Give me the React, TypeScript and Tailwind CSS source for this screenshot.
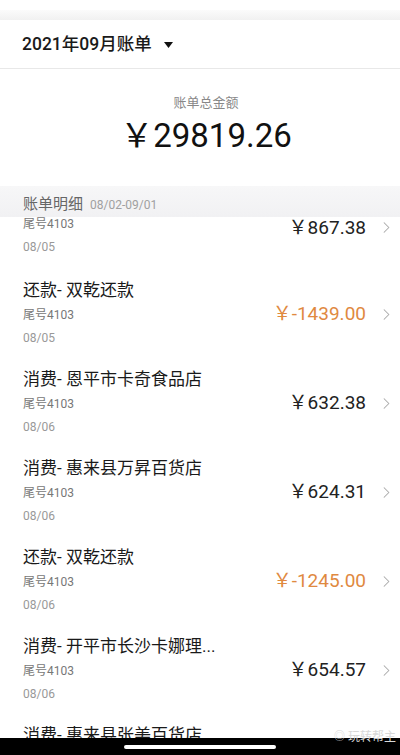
import { ChevronRight } from "lucide-react";

type Bill = { title: string; card: string; date: string; amount: string; refund?: boolean };

// first bill is scrolled half under the sticky header, so it is drawn apart
const firstBill: Bill = { title: "", card: "尾号4103", date: "08/05", amount: "￥867.38" };

const bills: Bill[] = [
    { title: "还款- 双乾还款", card: "尾号4103", date: "08/05", amount: "￥-1439.00", refund: true },
    { title: "消费- 恩平市卡奇食品店", card: "尾号4103", date: "08/06", amount: "￥632.38" },
    { title: "消费- 惠来县万昇百货店", card: "尾号4103", date: "08/06", amount: "￥624.31" },
    { title: "还款- 双乾还款", card: "尾号4103", date: "08/06", amount: "￥-1245.00", refund: true },
    { title: "消费- 开平市长沙卡娜理...", card: "尾号4103", date: "08/06", amount: "￥654.57" },
    { title: "消费- 惠来县张美百货店", card: "尾号4103", date: "08/07", amount: "￥588.20" },
];

const amountColor = (b: Bill) => b.refund ? 'text-[#e0893f]' : 'text-[#222]';

const BillRow = ({ bill }: { bill: Bill }) => {
    return <div className="h-[89px] shrink-0 pt-[10px] pl-[23px] pr-[4px] flex flex-row items-start">
        <div className="flex-1 flex flex-col">
            <p className="text-[17px] leading-[22px] text-[#1a1a1a] whitespace-nowrap">{bill.title}</p>
            <p className="text-[12px] leading-[22px] mt-[3px] text-[#777]">{bill.card}</p>
            <p className="text-[12px] leading-[22px] mt-[1px] text-[#999]">{bill.date}</p>
        </div>
        <p className={`text-[19px] leading-[26px] mt-[22px] ${amountColor(bill)}`}>{bill.amount}</p>
        <ChevronRight className="ml-[11px] mt-[26px] text-[#a8a8a8]" size={19} strokeWidth={1.3} />
    </div>
}

const FirstRow = ({ bill }: { bill: Bill }) => {
    return <div className="h-[52px] shrink-0 pl-[23px] pr-[4px] flex flex-row items-start">
        <div className="flex-1 flex flex-col">
            <p className="text-[12px] leading-[14px] text-[#777]">{bill.card}</p>
            <p className="text-[12px] leading-[22px] mt-[5px] text-[#999]">{bill.date}</p>
        </div>
        <p className={`text-[19px] leading-[22px] ${amountColor(bill)}`}>{bill.amount}</p>
        <ChevronRight className="ml-[11px] mt-[1px] text-[#a8a8a8]" size={19} strokeWidth={1.3} />
    </div>
}

export default function App() {
    return <div className="w-[400px] h-[755px] overflow-hidden bg-white flex flex-col" style={{ fontFamily: "Roboto, 'Noto Sans CJK SC', sans-serif" }}>
        <div className="h-[10px] shrink-0 bg-white" />
        <div className="h-[10px] shrink-0 bg-gradient-to-b from-[#fbfbfb] to-[#f1f1f1]" />
        <div className="h-[49px] shrink-0 flex flex-row items-center pl-[22px] border-b border-[#e8e8e8]">
            <p className="text-[17.5px] font-medium text-[#1a1a1a]">2021年09月账单</p>
            <svg className="ml-[12px] mt-[1px]" width="9" height="6" viewBox="0 0 9 6"><polygon points="0,0 9,0 4.5,6" fill="#111" /></svg>
        </div>
        <div className="h-[117px] shrink-0 flex flex-col items-center pt-[26px] pl-[12px]">
            <p className="text-[13px] leading-[16px] text-[#888]">账单总金额</p>
            <p className="text-[33px] leading-[40px] mt-[5px] text-[#111]">￥29819.26</p>
        </div>
        <div className="h-[31px] shrink-0 bg-gradient-to-b from-[#f7f7f8] to-[#f1f1f3] flex flex-row items-end pb-[3px] pl-[23px] gap-[7px]">
            <p className="text-[15px] leading-[20px] text-[#666]">账单明细</p>
            <p className="text-[12px] leading-[18px] text-[#a0a0a0]">08/02-09/01</p>
        </div>
        <div className="flex-1 overflow-hidden relative flex flex-col">
            <FirstRow bill={firstBill} />
            {bills.map((b, i) => <BillRow key={i} bill={b} />)}
        </div>
        <div className="h-[17px] shrink-0 bg-black flex items-center justify-center relative">
            <div className="w-[152px] h-[4px] rounded-full bg-white" />
            <p className="absolute right-[4px] -top-[9px] text-[12px] leading-[16px] text-[#d8d8d8] flex items-center gap-[3px]">
                <span className="text-[11px]">◎</span>玩转帮主
            </p>
        </div>
    </div>
}
